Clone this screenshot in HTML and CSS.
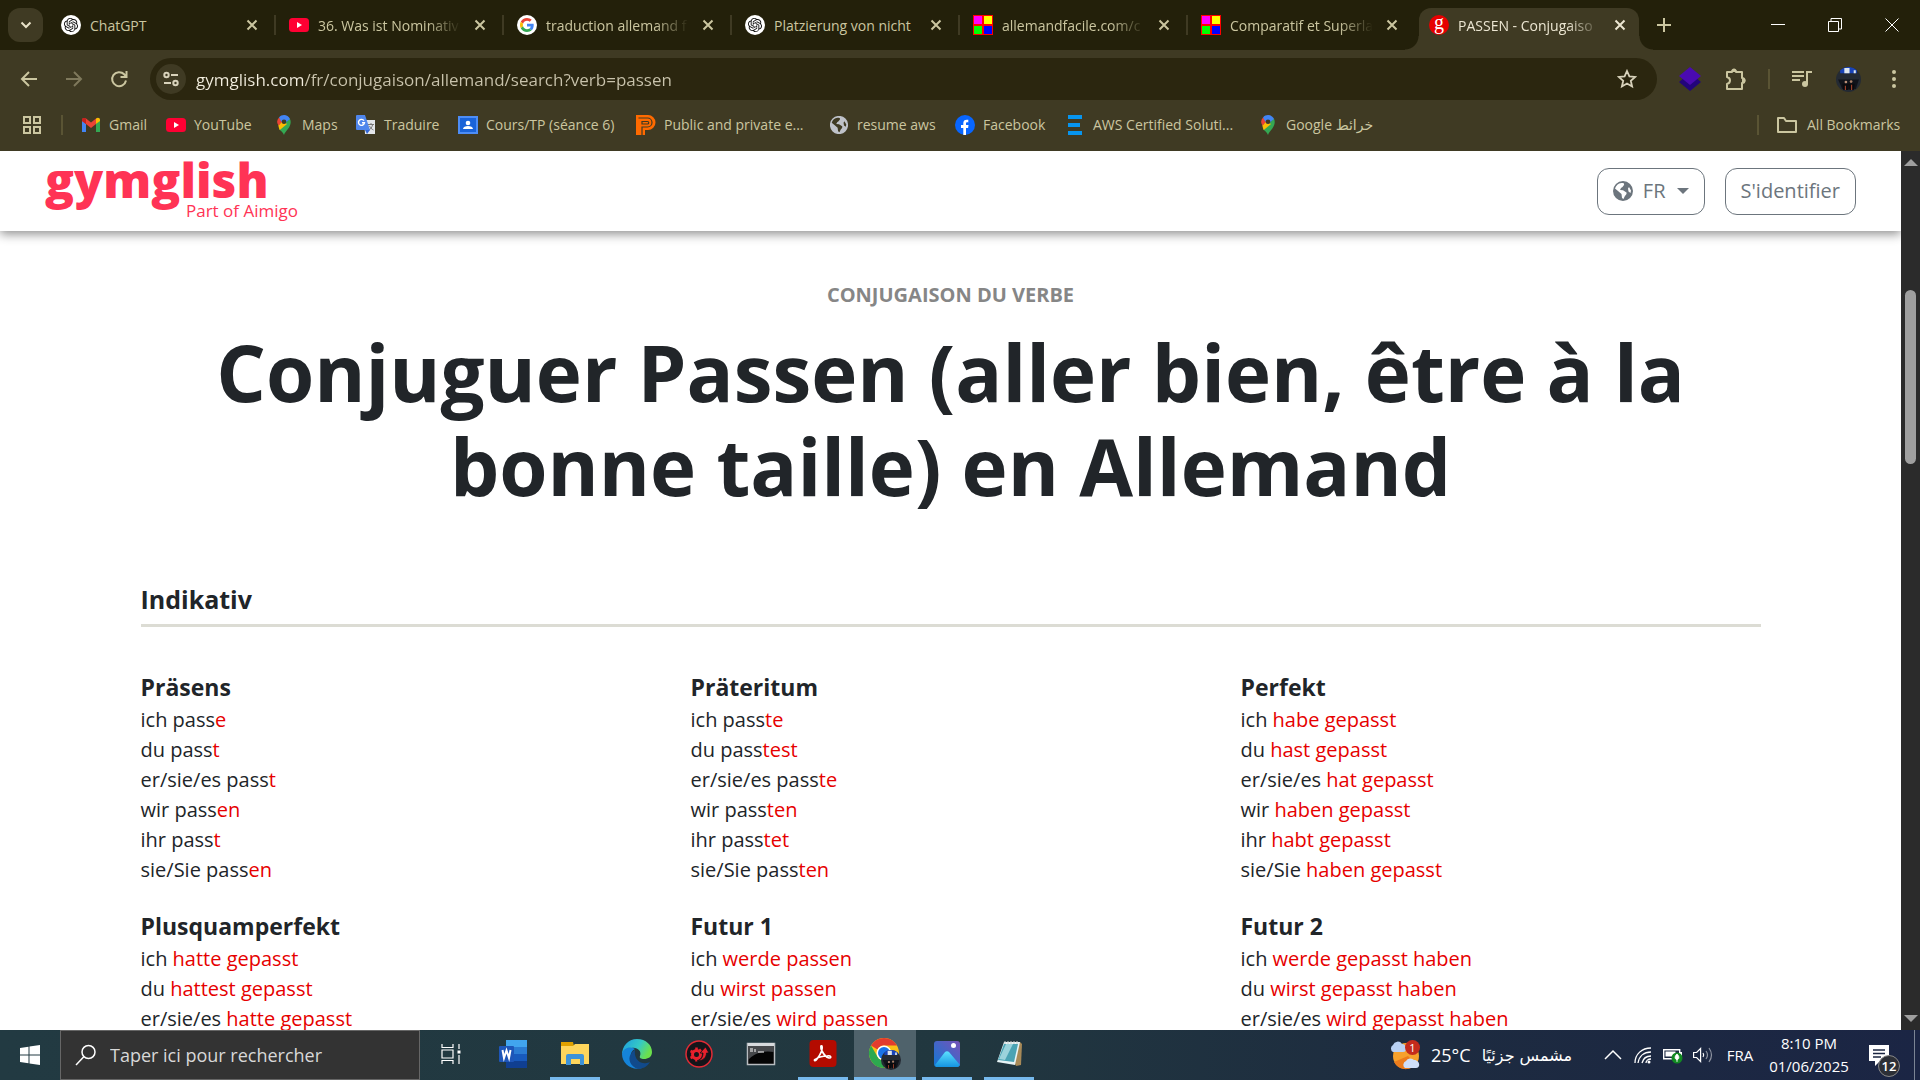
FILE: index.html
```html
<!DOCTYPE html>
<html lang="fr">
<head>
<meta charset="utf-8">
<title>PASSEN - Conjugaison</title>
<link rel="stylesheet" href="styles.css">
</head>
<body>
<svg class="sprite" aria-hidden="true">
  <symbol id="x" viewBox="0 0 12 12"><path d="M1.500 1.500 10.500 10.500M10.500 1.500 1.500 10.500" fill="none" stroke="currentColor" stroke-width="2"/></symbol>
  <symbol id="gpt" viewBox="-5 -5 34 34"><circle cx="12" cy="12" r="17" fill="#fff"/><path fill="#111" d="M22.2819 9.8211a5.9847 5.9847 0 0 0-.5157-4.9108 6.0462 6.0462 0 0 0-6.5098-2.9A6.0651 6.0651 0 0 0 4.9807 4.1818a5.9847 5.9847 0 0 0-3.9977 2.9 6.0462 6.0462 0 0 0 .7427 7.0966 5.98 5.98 0 0 0 .511 4.9107 6.051 6.051 0 0 0 6.5146 2.9001A5.9847 5.9847 0 0 0 13.2599 24a6.0557 6.0557 0 0 0 5.7718-4.2058 5.9894 5.9894 0 0 0 3.9977-2.9001 6.0557 6.0557 0 0 0-.7475-7.0729zm-9.022 12.6081a4.4755 4.4755 0 0 1-2.8764-1.0408l.1419-.0804 4.7783-2.7582a.7948.7948 0 0 0 .3927-.6813v-6.7369l2.02 1.1686a.071.071 0 0 1 .038.052v5.5826a4.504 4.504 0 0 1-4.4945 4.4944zm-9.6607-4.1254a4.4708 4.4708 0 0 1-.5346-3.0137l.142.0852 4.783 2.7582a.7712.7712 0 0 0 .7806 0l5.8428-3.3685v2.3324a.0804.0804 0 0 1-.0332.0615L9.74 19.9502a4.4992 4.4992 0 0 1-6.1408-1.6464zM2.3408 7.8956a4.485 4.485 0 0 1 2.3655-1.9728V11.6a.7664.7664 0 0 0 .3879.6765l5.8144 3.3543-2.0201 1.1685a.0757.0757 0 0 1-.071 0l-4.8303-2.7865A4.504 4.504 0 0 1 2.3408 7.872zm16.5963 3.8558L13.1038 8.364 15.1192 7.2a.0757.0757 0 0 1 .071 0l4.8303 2.7913a4.4944 4.4944 0 0 1-.6765 8.1042v-5.6772a.79.79 0 0 0-.407-.667zm2.0107-3.0231l-.142-.0852-4.7735-2.7818a.7759.7759 0 0 0-.7854 0L9.409 9.2297V6.8974a.0662.0662 0 0 1 .0284-.0615l4.8303-2.7866a4.4992 4.4992 0 0 1 6.6802 4.66zM8.3065 12.863l-2.02-1.1638a.0804.0804 0 0 1-.038-.0567V6.0742a4.4992 4.4992 0 0 1 7.3757-3.4537l-.142.0805L8.704 5.459a.7948.7948 0 0 0-.3927.6813zm1.0976-2.3654l2.602-1.4998 2.6069 1.4998v2.9994l-2.5974 1.4997-2.6067-1.4997Z"/></symbol>
  <symbol id="yt" viewBox="0 0 20 20"><rect y="3" width="20" height="14" rx="3.500" fill="#ff0033"/><path d="M8 7v6l5-3z" fill="#fff"/></symbol>
  <symbol id="facile" viewBox="0 0 20 20"><path fill="#f00" d="M0 0h20v20H0z"/><path fill="#f0f" d="M1 1h8v8H1z"/><path fill="#ff0" d="M11 1h8v8h-8z"/><path fill="#0f0" d="M1 11h8v8H1z"/><path fill="#00f" d="M11 11h8v8h-8z"/></symbol>
  <symbol id="g" viewBox="0 0 48 48"><path fill="#EA4335" d="M24 9.500c3.540 0 6.710 1.220 9.210 3.600l6.850-6.850C35.900 2.380 30.470 0 24 0 14.620 0 6.510 5.380 2.560 13.220l7.980 6.190C12.430 13.720 17.740 9.500 24 9.500z"/><path fill="#4285F4" d="M46.980 24.550c0-1.570-.15-3.090-.38-4.550H24v9.020h12.940c-.58 2.960-2.260 5.480-4.780 7.180l7.730 6c4.510-4.180 7.090-10.360 7.090-17.650z"/><path fill="#FBBC05" d="M10.530 28.590c-.48-1.450-.76-2.990-.76-4.590s.27-3.140.76-4.590l-7.980-6.190C.92 16.460 0 20.120 0 24s.92 7.540 2.560 10.780l7.970-6.190z"/><path fill="#34A853" d="M24 48c6.480 0 11.930-2.130 15.890-5.810l-7.730-6c-2.150 1.450-4.920 2.300-8.160 2.300-6.260 0-11.570-4.220-13.470-9.910l-7.980 6.190C6.510 42.620 14.620 48 24 48z"/></symbol>
  <symbol id="pin" viewBox="0 0 20 20"><path fill="#34a853" d="M10 20c1-4 6.700-7 6.700-13A6.700 6.700 0 0 0 15.800 3.600L5 14c2 2 4 3.500 5 6z"/><path fill="#fbbc04" d="M4.400 10.500 8 6l5 3-7.200 6C5 13.800 4.600 12 4.400 10.500z"/><path fill="#ea4335" d="M5 2.500A6.500 6.500 0 0 0 4.400 10.500L9 6z"/><path fill="#4285f4" d="M5 2.500C8-1.200 14-.6 16 4l-6 5-3-3z"/><circle cx="10" cy="6.800" r="2.300" fill="#3f3a23"/></symbol>
  <symbol id="earth" viewBox="0 0 20 20"><path fill="currentColor" fill-rule="evenodd" d="M10 0a10 10 0 1 0 0 20 10 10 0 0 0 0-20zM8.500 2c2 0 3 .3 2.500 2L9.500 6 8 7 7 9l3 .2 3.500 2.300c.5 1.500-.8 2.500-1.600 3.500L10.500 18 9 17l-.5-4L5 10 2 7.500C3 4.500 5 2.300 8.500 2zM16 6l2 3.500-.5 2.500-2-1.500-.5-3z"/></symbol>
  <symbol id="avatar" viewBox="0 0 24 24"><circle cx="12" cy="12" r="12" fill="#242a33"/><path fill="#1a44b8" d="M4 3a12 12 0 0 1 16 0v3H4z"/><path fill="#dfe7ee" d="M8 1h5v5H8zM17 3h2v3h-2z"/><path fill="#10131a" d="M2 12h20l-3 9H6z"/><circle cx="9.500" cy="14.500" r="1.300" fill="#b98e76"/><circle cx="14.500" cy="14" r="1.300" fill="#a98068"/><path fill="#0a0a0d" d="M6 16h6v6H7zM12 16h6l-1 6h-4z"/><path stroke="#a8432c" d="M9 18v4M15 17v5"/></symbol>
</svg>

<header class="browser">
  <div class="tabstrip">
    <button class="tab-search" aria-label="Rechercher dans les onglets"><svg viewBox="0 0 12 12" width="12" height="12"><path d="M1.500 3.500 6 8l4.500-4.500" fill="none" stroke="currentColor" stroke-width="2"/></svg></button>
    <nav class="tabs">
      <div class="tab"><svg class="fav"><use href="#gpt"/></svg><span class="tab-title fits">ChatGPT</span><button class="close" aria-label="Fermer"><svg><use href="#x"/></svg></button></div>
      <div class="tab"><svg class="fav"><use href="#yt"/></svg><span class="tab-title">36. Was ist Nominativ</span><button class="close" aria-label="Fermer"><svg><use href="#x"/></svg></button></div>
      <div class="tab"><svg class="fav" viewBox="0 0 20 20"><circle cx="10" cy="10" r="10" fill="#fff"/><use href="#g" x="3" y="3" width="14" height="14"/></svg><span class="tab-title">traduction allemand f</span><button class="close" aria-label="Fermer"><svg><use href="#x"/></svg></button></div>
      <div class="tab"><svg class="fav"><use href="#gpt"/></svg><span class="tab-title fits">Platzierung von nicht</span><button class="close" aria-label="Fermer"><svg><use href="#x"/></svg></button></div>
      <div class="tab"><svg class="fav"><use href="#facile"/></svg><span class="tab-title">allemandfacile.com/c</span><button class="close" aria-label="Fermer"><svg><use href="#x"/></svg></button></div>
      <div class="tab"><svg class="fav"><use href="#facile"/></svg><span class="tab-title">Comparatif et Superla</span><button class="close" aria-label="Fermer"><svg><use href="#x"/></svg></button></div>
      <div class="tab active"><span class="fav gfav">g</span><span class="tab-title">PASSEN - Conjugaiso</span><button class="close" aria-label="Fermer"><svg><use href="#x"/></svg></button></div>
    </nav>
    <button class="new-tab" aria-label="Nouvel onglet"><svg viewBox="0 0 14 14" width="14" height="14"><path d="M7 0v14M0 7h14" stroke="currentColor" stroke-width="2"/></svg></button>
    <div class="window-buttons">
      <button aria-label="Réduire"><svg viewBox="0 0 14 14" width="14" height="14"><path d="M0 6.500h14" stroke="#fff"/></svg></button>
      <button aria-label="Restaurer"><svg viewBox="0 0 14 14" width="14" height="14"><path d="M.5 3.500h10v10H.5zM3 3.500v-3h10.500v10.500h-3" fill="none" stroke="#fff"/></svg></button>
      <button aria-label="Fermer la fenêtre"><svg viewBox="0 0 14 14" width="14" height="14"><path d="M.5.5l13 13M13.500.5l-13 13" stroke="#fff"/></svg></button>
    </div>
  </div>

  <div class="toolbar">
    <div class="nav-buttons">
      <button aria-label="Retour"><svg viewBox="0 0 20 20" width="20" height="20"><path d="M18 10H3M10 3l-7 7 7 7" fill="none" stroke="currentColor" stroke-width="2"/></svg></button>
      <button aria-label="Avancer" disabled><svg viewBox="0 0 20 20" width="20" height="20"><path d="M2 10h15M10 3l7 7-7 7" fill="none" stroke="currentColor" stroke-width="2"/></svg></button>
      <button aria-label="Actualiser"><svg viewBox="0 0 20 20" width="20" height="20"><path d="M17 11.500a7 7 0 1 1-1.800-6.200L17.500 8M17.500 2v6h-6" fill="none" stroke="currentColor" stroke-width="2"/></svg></button>
    </div>
    <div class="omnibox">
      <button class="site-info" aria-label="Informations sur le site"><svg viewBox="0 0 16 16" width="16" height="16"><g fill="none" stroke="currentColor" stroke-width="2"><circle cx="3.500" cy="4" r="2.200"/><path d="M8 4h7M1 12h7"/><circle cx="12.500" cy="12" r="2.200"/></g></svg></button>
      <input class="url" aria-label="Adresse" value="gymglish.com/fr/conjugaison/allemand/search?verb=passen">
      <button class="star" aria-label="Ajouter aux favoris"><svg viewBox="0 0 20 20" width="20" height="20"><path d="M10 2l2.400 5.400 5.800.5-4.400 3.900 1.300 5.700-5.100-3-5.100 3 1.300-5.700L1.800 7.900l5.800-.5z" fill="none" stroke="currentColor" stroke-width="1.800"/></svg></button>
    </div>
    <div class="extensions">
      <button aria-label="Extension"><svg viewBox="0 0 22 24" width="22" height="24"><path d="M11 6l11 9-11 9-11-9z" fill="#22057a"/><path d="M11 0l11 9-11 9L0 9z" fill="#4a0ab0"/></svg></button>
      <button aria-label="Extensions"><svg viewBox="0 0 22 24" width="22" height="24"><path d="M2 5h5a2 2 0 0 1 4 0h6v6a2 2 0 0 1 0 5v6H2v-5c4-1 4-6 0-7z" fill="none" stroke="currentColor" stroke-width="2" stroke-linejoin="round"/><path d="M6.500 5a2.500 3.500 0 0 1 5 0zM17 11a3.500 2.500 0 0 1 0 5z" fill="currentColor"/></svg></button>
      <span class="bar"></span>
      <button aria-label="Commandes multimédias"><svg viewBox="0 0 20 20" width="20" height="20"><g fill="none" stroke="currentColor" stroke-width="2"><path d="M0 3h12M0 7h12M0 11h8M15 15V3h5"/></g><circle cx="13" cy="15" r="3" fill="currentColor"/></svg></button>
      <button aria-label="Profil"><svg width="25" height="25"><use href="#avatar"/></svg></button>
      <button aria-label="Menu"><svg viewBox="0 0 6 20" width="6" height="20"><g fill="currentColor"><circle cx="3" cy="3" r="2"/><circle cx="3" cy="10" r="2"/><circle cx="3" cy="17" r="2"/></g></svg></button>
    </div>
  </div>

  <nav class="bookmarks">
    <button class="apps" aria-label="Applications"><svg viewBox="0 0 18 18" width="18" height="18"><path d="M1 1h6v6H1zM11 1h6v6h-6zM1 11h6v6H1zM11 11h6v6h-6z" fill="none" stroke="currentColor" stroke-width="2"/></svg></button>
    <span class="bar"></span>
    <a href="#"><svg viewBox="0 0 20 20"><path d="M1 5v12h4V9z" fill="#4285f4"/><path d="M19 5v12h-4V9z" fill="#34a853"/><path d="M1 5c0-2.500 2.500-2.500 4-1.500l5 4 5-4V9l-5 4-5-4-4-3z" fill="#ea4335"/><path d="M15 9V3.500C17 2 19 3 19 5v1z" fill="#fbbc04"/><path d="M1 6V5c0-2 2-2.500 4-1.500V9z" fill="#c5221f"/></svg>Gmail</a>
    <a href="#"><svg><use href="#yt"/></svg>YouTube</a>
    <a href="#"><svg><use href="#pin"/></svg>Maps</a>
    <a href="#"><svg viewBox="0 0 20 20"><path d="M8 5h11v14H9z" fill="#e3e6ea"/><path d="M12 9.500h6M15 8v2M13 15c2-1 3-3 3.500-5M13.500 11c1 2 2 3 4 4" stroke="#777" fill="none"/><path d="M9 15l2 4 3-4z" fill="#3367d6"/><path d="M1 0h8l5 15H1a1 1 0 0 1-1-1V1a1 1 0 0 1 1-1z" fill="#4f86ec"/><path d="M8 5.700a3 3 0 1 0 .5 2H6" fill="none" stroke="#fff" stroke-width="1.400"/></svg>Traduire</a>
    <a href="#"><svg viewBox="0 0 20 20"><path d="M0 1h20v18H0z" fill="#4d8df6"/><path d="M2 3h16v14H2z" fill="#1a63d8"/><circle cx="10" cy="8" r="2.300" fill="#fff"/><path d="M5 14c0-4 10-4 10 0z" fill="#fff"/></svg>Cours/TP (séance 6)</a>
    <a href="#"><svg viewBox="0 0 20 20"><path d="M0 0h12a7.500 7.500 0 0 1 0 15H9v5H0z" fill="#ff6a00"/><path d="M2.500 3h9a4.500 4.500 0 0 1 0 9H6v8M6 6.500h5.500a1 1 0 0 1 0 2.500H6z" fill="none" stroke="#3f3a23" stroke-width="1.200"/></svg>Public and private e...</a>
    <a href="#"><svg class="earth" viewBox="-1 -1 22 22"><use href="#earth" width="20" height="20"/></svg>resume aws</a>
    <a href="#"><svg viewBox="0 0 20 20"><circle cx="10" cy="10" r="10" fill="#0866ff"/><path d="M8.300 20v-7H6v-3h2.300V8.300c0-3 1.700-4 5-3.500v2.600c-2-.2-2.300.3-2.300 1.300V10h2.500l-.4 3H11v7z" fill="#fff"/></svg>Facebook</a>
    <a href="#"><svg viewBox="0 0 20 20"><path d="M3 0h14v4H3zM3 8h12v4H3zM3 16h14v4H3z" fill="#0795ef"/></svg>AWS Certified Soluti...</a>
    <a href="#"><svg><use href="#pin"/></svg>Google خرائط</a>
    <span class="bar"></span>
    <a href="#"><svg viewBox="0 0 20 20"><path d="M1 3h6l2 3h10v11H1z" fill="none" stroke="currentColor" stroke-width="2" stroke-linejoin="round"/></svg>All Bookmarks</a>
  </nav>
</header>

<div class="viewport">
  <div class="page">
    <header class="site-header">
      <a class="logo" href="#"><span class="logo-name">gymglish</span><span class="logo-sub">Part of Aimigo</span></a>
      <div class="site-actions">
        <button class="outline"><svg class="globe"><use href="#earth"/></svg>FR<span class="caret"></span></button>
        <button class="outline">S'identifier</button>
      </div>
    </header>
    <main class="content">
      <p class="kicker">CONJUGAISON DU VERBE</p>
      <h1>Conjuguer Passen (aller bien, être à la bonne taille) en Allemand</h1>
      <h2>Indikativ</h2>
      <div class="tenses">
        <section><h3>Präsens</h3><ul><li>ich pass<b>e</b></li><li>du pass<b>t</b></li><li>er/sie/es pass<b>t</b></li><li>wir pass<b>en</b></li><li>ihr pass<b>t</b></li><li>sie/Sie pass<b>en</b></li></ul></section>
        <section><h3>Präteritum</h3><ul><li>ich pass<b>te</b></li><li>du pass<b>test</b></li><li>er/sie/es pass<b>te</b></li><li>wir pass<b>ten</b></li><li>ihr pass<b>tet</b></li><li>sie/Sie pass<b>ten</b></li></ul></section>
        <section><h3>Perfekt</h3><ul><li>ich <b>habe gepasst</b></li><li>du <b>hast gepasst</b></li><li>er/sie/es <b>hat gepasst</b></li><li>wir <b>haben gepasst</b></li><li>ihr <b>habt gepasst</b></li><li>sie/Sie <b>haben gepasst</b></li></ul></section>
        <section><h3>Plusquamperfekt</h3><ul><li>ich <b>hatte gepasst</b></li><li>du <b>hattest gepasst</b></li><li>er/sie/es <b>hatte gepasst</b></li></ul></section>
        <section><h3>Futur 1</h3><ul><li>ich <b>werde passen</b></li><li>du <b>wirst passen</b></li><li>er/sie/es <b>wird passen</b></li></ul></section>
        <section><h3>Futur 2</h3><ul><li>ich <b>werde gepasst haben</b></li><li>du <b>wirst gepasst haben</b></li><li>er/sie/es <b>wird gepasst haben</b></li></ul></section>
      </div>
    </main>
  </div>
  <div class="scrollbar"><span class="arrow up"></span><div class="track"><div class="thumb"></div></div><span class="arrow down"></span></div>
</div>

<footer class="taskbar">
  <button class="start" aria-label="Démarrer"><svg viewBox="0 0 20 20" width="20" height="20"><path fill="#fff" d="M0 3l8.500-1.200v7.700H0zM9.500 1.600 20 0v9.500H9.500zM0 10.500h8.500v7.700L0 17zM9.500 10.500H20V20L9.500 18.400z"/></svg></button>
  <label class="search"><svg viewBox="0 0 22 22" width="22" height="22"><g fill="none" stroke="#fff" stroke-width="1.500"><circle cx="13.500" cy="8" r="6.500"/><path d="M9 12.500 1 21"/></g></svg><input type="text" placeholder="Taper ici pour rechercher" aria-label="Rechercher"></label>
  <div class="apps-row">
    <button aria-label="Vue des tâches"><svg viewBox="0 0 20 20" width="20" height="20"><path d="M1 0v3.500h11V0M1 20v-3.500h11V20M1 6h11v8H1zM18 0v5M18 11v9" fill="none" stroke="#fff" stroke-width="1.200"/><path d="M16.500 6.500h3v3h-3z" fill="#fff"/></svg></button>
    <button aria-label="Word"><svg viewBox="0 0 30 30" width="30" height="30"><path d="M8 1h21v7H8z" fill="#41a5ee"/><path d="M8 8h21v7H8z" fill="#2b7cd3"/><path d="M8 15h21v7H8z" fill="#185abd"/><path d="M8 22h21v7H8z" fill="#103f91"/><rect x="1" y="7" width="15" height="16" rx="1" fill="#1e56b8"/><path d="M4.500 11l1.500 8 2.500-7.500L11 19l1.500-8" fill="none" stroke="#fff" stroke-width="2"/></svg></button>
    <button class="open" aria-label="Explorateur"><svg viewBox="0 0 30 30" width="30" height="30"><path d="M1 3h12l1 4H1z" fill="#e0a100"/><path d="M1 7h12l2-2h14v20H1z" fill="#ffd65c"/><path d="M6 26V17a2 2 0 0 1 2-2h14a2 2 0 0 1 2 2v9h-4v-6h-9v6z" fill="#3e93d8"/></svg></button>
    <button aria-label="Edge"><svg viewBox="0 0 30 30" width="30" height="30"><defs><linearGradient id="e1" x1="0" x2="1" y1="0" y2=".4"><stop offset="0" stop-color="#1c9ce0"/><stop offset=".6" stop-color="#35c9c5"/><stop offset="1" stop-color="#6be04c"/></linearGradient></defs><path d="M15 0C24 0 30 6 30 13c0 5-4 7-8 7-3 0-5-1-4-3 2-5-3-9-8-8C5 9 1 12 0 16 0 7 6 0 15 0z" fill="url(#e1)"/><path d="M0 15c1-6 8-8 13-5-4 2-5 6-4 10s6 10 11 9C10 32 0 25 0 15z" fill="#1583d8"/><path d="M13 11c-1 6 2 12 8 13 3 .5 5 0 7-1-3 5-8 7-12 7-7-2-11-10-7-15 1-2 2-3 4-4z" fill="#114a8b"/></svg></button>
    <button aria-label="Driver Booster"><svg viewBox="0 0 30 30" width="30" height="30"><circle cx="15" cy="15" r="13" fill="#15151a" stroke="#e02b35" stroke-width="1.500"/><circle cx="12.500" cy="15.500" r="4" fill="none" stroke="#e8202c" stroke-width="3"/><path d="M12.500 8.500v3M6.500 12l3 1.500M6.500 19l3-1.500M12.500 22.500v-3M17 10.500l-2 2" stroke="#e8202c" stroke-width="2.600"/><path d="M13 22c4-1 6-4 6-8h-3l5.500-6 3.500 6h-2.500c0 5-4 8-9.500 8z" fill="#e8202c" stroke="#15151a" stroke-width=".8"/></svg></button>
    <button aria-label="Invite de commandes"><svg viewBox="0 0 30 30" width="30" height="30"><path d="M1.500 4.500h27v21h-27z" fill="#050505" stroke="#b8bcc0" stroke-width="1.500"/><path d="M2 4h26v3H2z" fill="#d7dadd"/><path d="M2 7h26v6C18 11 8 14 2 21z" fill="#46484b"/><path d="M4 10h3M4 12h3M9 10v3M12 13h6" stroke="#fff"/></svg></button>
    <button class="open" aria-label="Acrobat"><svg viewBox="0 0 30 30" width="30" height="30"><rect x="1.500" y="1" width="27" height="27" rx="4" fill="#b30b00"/><path d="M8 20c-3 1-1 3 1 0 3-4 6-10 5-13-1-1-2 1 0 5s4 6 7 7c3 0 2-3-2-2-4 0-8 1-11 3z" fill="none" stroke="#fff" stroke-width="1.700"/></svg></button>
    <button class="open current" aria-label="Chrome"><svg viewBox="0 0 34 34" width="34" height="34"><circle cx="16" cy="16" r="15" fill="#fbc116"/><path d="M3 8.500A15 15 0 0 1 29 8.500H16a7.500 7.500 0 0 0-6.500 4z" fill="#e33b2e"/><path d="M3 8.500A15 15 0 0 0 16 31l6.500-11.200a7.500 7.500 0 0 1-13 0z" fill="#2da94f"/><circle cx="16" cy="16" r="7.500" fill="#fff"/><circle cx="16" cy="16" r="6" fill="#1a73e8"/><use href="#avatar" x="13" y="13" width="20" height="20"/></svg></button>
    <button class="open" aria-label="Photos"><svg viewBox="0 0 30 30" width="30" height="30"><defs><linearGradient id="p1" x1="0" y1="1" x2="1" y2="0"><stop offset="0" stop-color="#1178d4"/><stop offset="1" stop-color="#7752b8"/></linearGradient><linearGradient id="p2" x1="0" x2="0" y1="0" y2="1"><stop offset="0" stop-color="#5ce1ff"/><stop offset="1" stop-color="#1593e0"/></linearGradient></defs><rect x="2" y="2" width="26" height="26" rx="3" fill="url(#p1)"/><path d="M3 26 13 13c1-1 3-1 4 0l11 13-2 2H4z" fill="url(#p2)"/><circle cx="21.500" cy="6.500" r="2.500" fill="#fff"/></svg></button>
    <button class="open" aria-label="Bloc-notes"><svg viewBox="0 0 30 30" width="30" height="30"><path d="M10 3h16l2 2-1 21-5 1z" fill="#a88a58"/><path d="M10 3h16l-5 23-18-3z" fill="#e8f4f6"/><path d="M10 5h14l-4 18-16-2z" fill="#4aa3b4"/><path d="M12 5l7 0-8 16-6-1z" fill="#9bd3dc"/><path d="M11 2v3M14 2v3M17 2v3M20 2v3M23 2v3" stroke="#ccc"/></svg></button>
  </div>
  <div class="tray">
    <button class="weather"><span class="weather-icon"><svg viewBox="0 0 30 30" width="30" height="30"><circle cx="16" cy="16" r="13" fill="#f6a12c"/><path d="M4 22a13 13 0 0 0 22 2l-8-8z" fill="#ec7c1c"/><path d="M3 12a4 4 0 0 1 0-7 5 5 0 0 1 9-1c5 0 6 8 1 8z" fill="#b9d1f4"/><path d="M15 28a4 4 0 0 1 1-7 5 5 0 0 1 8-1c6 0 7 8 2 8z" fill="#cfe0fa"/></svg><span class="alert">1</span></span><span>25°C</span><span class="arabic" lang="ar" dir="rtl">مشمس جزئيًا</span></button>
    <button aria-label="Icônes cachées"><svg viewBox="0 0 18 18" width="18" height="18"><path d="M1 13l8-8 8 8" fill="none" stroke="#fff" stroke-width="1.500"/></svg></button>
    <button aria-label="Wi-Fi"><svg viewBox="0 0 18 18" width="18" height="18"><g fill="none" stroke="#fff" stroke-width="1.300"><path d="M1 17C1 8 8 2 17 2M4 17C5 10 10 6 17 6M8 17c1-4 4-7 9-7M12 17c0-2 2-4 5-4"/></g><circle cx="15" cy="16" r="1.500" fill="#fff"/></svg></button>
    <button aria-label="Batterie"><svg viewBox="0 0 20 18" width="20" height="18"><path d="M.7 3.700h16v9H.7z" fill="none" stroke="#fff" stroke-width="1.400"/><path d="M2.500 5.500h10v5h-10zM17 6h2v4h-2z" fill="#fff"/><circle cx="14" cy="12" r="5.500" fill="#128a22"/><path d="M14 8c3 3 2 5 0 6-2-1-3-3 0-6zM14 11v5" fill="#fff" stroke="#fff" stroke-width=".8"/></svg></button>
    <button aria-label="Volume"><svg viewBox="0 0 20 18" width="20" height="18"><g fill="none" stroke="#fff" stroke-width="1.200"><path d="M.6 6.500h3l4-4v13l-4-4h-3z"/><path d="M10 7q1.500 2 0 4"/><path d="M13 5q3 4 0 8M16 2q5 7 0 14" opacity=".5"/></g></svg></button>
    <span class="lang">FRA</span>
    <time class="clock"><span>8:10 PM</span><span>01/06/2025</span></time>
    <button class="notes" aria-label="Notifications"><svg viewBox="0 0 20 22" width="20" height="22"><path d="M0 1h20v16h-9l-5 5v-5H0z" fill="#fff"/><path d="M4 6h12M4 9.500h12M4 13h8" stroke="#1c2742" stroke-width="1.300"/></svg><span class="badge">12</span></button>
    <span class="desktop-edge"></span>
  </div>
</footer>
</body>
</html>
```
FILE: styles.css
```css
* { box-sizing: border-box; }
html, body { margin: 0; height: 100%; }
body {
  display: flex;
  flex-direction: column;
  overflow: hidden;
  font-family: "Open Sans", "Noto Sans", "DejaVu Sans", sans-serif;
  background: #fff;
}
button {
  display: flex;
  align-items: center;
  justify-content: center;
  padding: 0;
  border: 0;
  background: none;
  color: inherit;
  font: inherit;
}
a { color: inherit; text-decoration: none; }
input { min-width: 0; border: 0; padding: 0; background: none; font: inherit; outline: 0; }
.sprite { display: none; }

/* Browser chrome */
.browser { flex: none; background: #3f3a23; color: #cbc6a0; font-size: 14px; }
.tabstrip { display: flex; align-items: center; height: 50px; padding-left: 8px; background: #23200a; }
.tab-search { width: 35px; height: 34px; border-radius: 12px; background: #3f3a23; color: #e8e2c8; }
.tabs { display: flex; align-self: stretch; gap: 8px; padding: 8px 0 0 8px; }
.tab { position: relative; display: flex; align-items: center; width: 220px; padding: 0 9px 8px 10px; }
.tab + .tab::before {
  content: "";
  position: absolute;
  left: -5px;
  top: 7px;
  width: 2px;
  height: 20px;
  background: #3f3a23;
}
.fav { flex: none; width: 20px; height: 20px; }
.tab-title {
  flex: 1;
  margin: 0 3px 0 9px;
  overflow: hidden;
  white-space: nowrap;
  mask-image: linear-gradient(90deg, #000 calc(100% - 40px), transparent calc(100% - 6px));
}
.tab-title.fits { mask-image: none; }
.close { flex: none; width: 20px; height: 20px; }
.close svg { width: 12px; height: 12px; }
.tab.active { background: #3f3a23; border-radius: 12px 12px 0 0; color: #ece6d2; }
.tab.active::before { display: none; }
.tab.active::after {
  content: "";
  position: absolute;
  left: -14px;
  right: -14px;
  bottom: 0;
  height: 14px;
  background:
    radial-gradient(circle at 0 0, transparent 13px, #3f3a23 14px) left / 14px 14px no-repeat,
    radial-gradient(circle at 100% 0, transparent 13px, #3f3a23 14px) right / 14px 14px no-repeat;
}
.gfav {
  display: flex;
  justify-content: center;
  border-radius: 50%;
  background: #e60000;
  color: #fff;
  font: 20px/14px "Liberation Serif", serif;
}
.new-tab { width: 50px; height: 34px; }
.window-buttons { display: flex; margin-left: auto; }
.window-buttons button { width: 57px; height: 50px; }

.toolbar { display: flex; align-items: center; padding: 8px 0 0 6px; }
.nav-buttons { display: flex; width: 144px; }
.nav-buttons button { width: 45px; height: 42px; }
.nav-buttons button:disabled { color: #7f795c; }
.omnibox {
  display: flex;
  flex: 1;
  align-items: center;
  height: 42px;
  padding: 0 20px 0 6px;
  border-radius: 21px;
  background: #2b260f;
  color: #d8d2bb;
}
.site-info { width: 30px; height: 30px; border-radius: 50%; background: #3f3a23; }
.url {
  flex: 1;
  margin-left: 10px;
  font-size: 17px;
  background: linear-gradient(90deg, #f4efe0 108px, #c9c3ac 108px);
  background-clip: text;
  -webkit-background-clip: text;
  color: transparent;
}
.extensions { display: flex; align-items: center; width: 263px; padding-left: 10px; }
.extensions button { width: 46px; }
.bar { width: 2px; height: 20px; background: #5a5434; }
.extensions .bar { margin: 0 9px 0 9px; }

.bookmarks {
  display: grid;
  grid-template-columns: 38px 20px 85px 108px 82px 102px 178px 193px 126px 110px 193px 1fr 20px 143px;
  align-items: center;
  height: 51px;
  padding: 0 0 2px 23px;
}
.bookmarks a { display: flex; align-items: center; gap: 8px; white-space: nowrap; }
.bookmarks a:last-child { gap: 10px; }
.bookmarks a svg { flex: none; width: 20px; height: 20px; }
.bookmarks .earth { color: #bfc2c9; }
.apps { justify-content: flex-start; }

/* Page */
.viewport { display: flex; flex: 1; min-height: 0; }
.page { flex: 1; overflow: hidden; color: #212529; font-size: 20px; line-height: 30px; }
.site-header {
  position: relative;
  display: flex;
  justify-content: space-between;
  align-items: center;
  height: 80px;
  padding: 0 45px;
  background: #fff;
  box-shadow: 0 3px 10px rgba(0, 0, 0, .45);
}
.logo { display: flex; flex-direction: column; width: 253px; padding-bottom: 5px; color: #ff3355; }
.logo-name { font-size: 48px; font-weight: 800; line-height: 45px; }
.logo-sub { align-self: flex-end; font-size: 17px; line-height: 18px; }
.site-actions { display: flex; gap: 20px; color: #6c757d; }
.outline { gap: 10px; height: 47px; padding: 0 15px; border: 1px solid #6c757d; border-radius: 12px; }
.globe { width: 20px; height: 20px; }
.caret { margin-left: 1px; border: 6px solid transparent; border-top-color: currentColor; border-bottom: 0; }
.content { max-width: 1620px; margin: 0 auto; padding-top: 49px; }
.kicker { margin: 0; text-align: center; font-size: 20px; font-weight: 700; color: #868686; }
h1 { margin: 15px 0 0; text-align: center; font-size: 78px; line-height: 94px; font-weight: 700; }
h2 { margin: 68px 0 0; padding-bottom: 7px; border-bottom: 3px solid #dcdcd4; font-size: 25px; line-height: 36px; font-weight: 700; }
.tenses { display: grid; grid-template-columns: repeat(3, 1fr); gap: 23px 30px; padding-top: 42px; }
h3 { margin: 0; font-size: 23px; line-height: 36px; font-weight: 700; }
ul { margin: 0; padding: 0; list-style: none; }
li b { font-weight: 400; color: #e60000; }

.scrollbar { display: flex; flex-direction: column; align-items: center; width: 19px; padding: 8px 0; background: #2b2b2b; }
.track { flex: 1; width: 11px; }
.thumb { height: 174px; margin-top: 124px; border-radius: 6px; background: #9f9f9f; }
.arrow { border: 7px solid transparent; }
.up { border-bottom-color: #9f9f9f; border-top: 0; }
.down { border-top-color: #9f9f9f; border-bottom: 0; }

/* Taskbar */
.taskbar {
  display: flex;
  flex: none;
  height: 50px;
  background: linear-gradient(90deg, #223a42, #21373f 50%, #1d2b40 75%, #1b2544);
  color: #fff;
}
.start { width: 60px; }
.search { display: flex; align-items: center; gap: 13px; width: 360px; padding: 0 14px; border: 1px solid #666; background: #333; }
.search input { flex: 1; font-size: 18px; color: #ddd; }
.search input::placeholder { color: #d8d8d8; opacity: 1; }
.apps-row { display: flex; }
.apps-row button { width: 62px; border-bottom: 3px solid transparent; }
.apps-row .open { position: relative; }
.apps-row .open::after { content: ""; position: absolute; left: 6px; right: 6px; bottom: -3px; height: 3px; background: #76b9ed; }
.apps-row .current { background: #4f626b; }
.apps-row .current::after { left: 0; right: 0; }
.tray { display: flex; align-items: center; margin-left: auto; font-size: 16px; }
.tray > button { width: 30px; height: 50px; }
.tray .weather { gap: 11px; width: 208px; justify-content: flex-start; font-size: 18px; white-space: nowrap; }
.weather-icon { position: relative; display: flex; }
.alert {
  position: absolute;
  right: 0;
  top: 0;
  width: 15px;
  height: 15px;
  border-radius: 50%;
  background: #c42b1c;
  font-size: 11px;
  line-height: 15px;
}
.arabic { font-family: "DejaVu Sans", sans-serif; font-size: 16px; }
.lang { width: 44px; text-align: center; font-size: 15px; }
.clock { display: flex; flex-direction: column; width: 94px; text-align: center; font-size: 15px; line-height: 23px; }
.tray .notes { position: relative; width: 46px; }
.badge {
  position: absolute;
  right: 2px;
  bottom: 3px;
  width: 22px;
  height: 22px;
  border: 1px solid #888;
  border-radius: 50%;
  background: #2c2f36;
  font-size: 13px;
  font-weight: 600;
  line-height: 20px;
  text-align: center;
}
.desktop-edge { width: 6px; height: 50px; margin-left: 12px; border-left: 1px solid #7b8494; }
```
